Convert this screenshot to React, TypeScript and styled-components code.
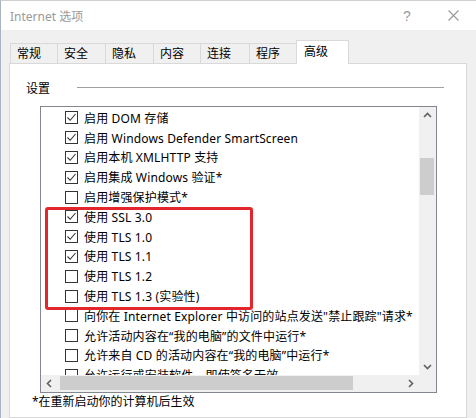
import React from "react";
import styled, { createGlobalStyle } from "styled-components";

const GlobalStyle = createGlobalStyle`
  html, body { margin: 0; padding: 0; background: #f0f0f0; }
  body { font-family: "Noto Sans", "Noto Sans CJK SC", sans-serif; font-size: 12px; color: #000; }
`;

const Window = styled.div`
  position: relative;
  width: 476px;
  height: 418px;
  box-sizing: border-box;
  border-left: 1px solid #a9b3c1;
  border-top: 1px solid #cfcfcf;
  background: #f0f0f0;
  display: flex;
  flex-direction: column;
  overflow: hidden;
`;

const TitleBar = styled.div`
  height: 29px;
  background: #fff;
  display: flex;
  align-items: center;
  padding-left: 9px;
`;

const Title = styled.div`
  flex: 1;
  color: #9a9a9a;
  font-size: 12px;
`;

const CaptionButton = styled.div`
  width: 46px;
  height: 29px;
  display: flex;
  align-items: center;
  justify-content: center;
  color: #9a9a9a;
  font-family: "Liberation Sans", sans-serif;
  font-size: 14px;
`;

const Body = styled.div`
  flex: 1;
  display: flex;
  flex-direction: column;
  padding: 10px 0 0 8px;
`;

const TabList = styled.div`
  display: flex;
  align-items: flex-end;
  height: 24px;
  padding-left: 1px;
  margin-bottom: -1px;
  position: relative;
  z-index: 1;
`;

const Tab = styled.div<{ $w: number; $active?: boolean }>`
  box-sizing: border-box;
  width: ${(p) => p.$w}px;
  height: ${(p) => (p.$active ? 24 : 21)}px;
  margin-left: -1px;
  border: 1px solid #d9d9d9;
  border-bottom: ${(p) => (p.$active ? "none" : "1px solid #d9d9d9")};
  background: ${(p) => (p.$active ? "#fff" : "#f0f0f0")};
  padding: ${(p) => (p.$active ? "2px 0 0 7px" : "1px 0 0 6px")};
  line-height: 17px;
  white-space: nowrap;
  &:first-child { margin-left: 0; }
`;

const Panel = styled.div`
  box-sizing: border-box;
  width: 458px;
  flex: 1;
  background: #fff;
  border: 1px solid #d9d9d9;
  display: flex;
  flex-direction: column;
`;

const GroupHeader = styled.div`
  display: flex;
  align-items: center;
  height: 16px;
  margin-top: 16px;
  padding: 0 22px 0 16px;
  gap: 27px;
`;

const GroupLine = styled.div`
  flex: 1;
  height: 1px;
  background: #a0a0a0;
  margin-top: -1px;
`;

const ListBox = styled.div`
  box-sizing: border-box;
  width: 397px;
  height: 287px;
  margin: 10px 0 0 30px;
  border: 1px solid #828790;
  display: grid;
  grid-template-columns: 1fr 17px;
  grid-template-rows: 1fr 17px;
  overflow: hidden;
`;

const Items = styled.div`
  overflow: hidden;
  padding-top: 1px;
`;

const Row = styled.div`
  height: 19.8px;
  display: flex;
  align-items: center;
  padding-left: 24px;
  white-space: nowrap;
  letter-spacing: 0.15px;
`;

const Box = styled.div`
  box-sizing: border-box;
  width: 13px;
  height: 13px;
  border: 1px solid #333;
  background: #fff;
  margin-right: 6px;
  flex: none;
  display: flex;
  align-items: center;
  justify-content: center;
`;

const VScroll = styled.div`
  background: #f0f0f0;
  display: flex;
  flex-direction: column;
`;

const HScroll = styled.div`
  background: #f0f0f0;
  display: flex;
`;

const Corner = styled.div`
  background: #f0f0f0;
`;

const ArrowBtn = styled.div`
  width: 17px;
  height: 17px;
  flex: none;
  display: flex;
  align-items: center;
  justify-content: center;
`;

const VTrack = styled.div`
  flex: 1;
  padding: 34px 2px 0 1px;
`;

const VThumb = styled.div`
  height: 37px;
  background: #cdcdcd;
`;

const HTrack = styled.div`
  flex: 1;
  padding: 1px 0 2px 2px;
  display: flex;
`;

const HThumb = styled.div`
  width: 293px;
  background: #cdcdcd;
`;

const Footer = styled.div`
  margin: 1px 0 0 22px;
  line-height: 16px;
`;

const Highlight = styled.div`
  position: absolute;
  left: 44px;
  top: 206px;
  width: 208px;
  height: 103px;
  box-sizing: border-box;
  border: 3px solid #e3262b;
  border-radius: 3px;
  pointer-events: none;
`;

const Check = () => (
  <svg width="11" height="11" viewBox="0 0 11 11">
    <polyline points="1.5,5.5 4.2,8.3 9.5,2" fill="none" stroke="#333" strokeWidth="1.1" />
  </svg>
);

const Chevron = ({ dir }: { dir: "up" | "down" | "left" | "right" }) => {
  const pts: Record<string, string> = {
    up: "1,6 4.5,2.5 8,6",
    down: "1,3 4.5,6.5 8,3",
    left: "6,1 2.5,4.5 6,8",
    right: "3,1 6.5,4.5 3,8",
  };
  return (
    <svg width="9" height="9" viewBox="0 0 9 9">
      <polyline points={pts[dir]} fill="none" stroke="#606060" strokeWidth="1.6" />
    </svg>
  );
};

const tabs: [string, number][] = [
  ["常规", 48],
  ["安全", 49],
  ["隐私", 49],
  ["内容", 48],
  ["连接", 50],
  ["程序", 48],
  ["高级", 53],
];

const items: [boolean, string][] = [
  [true, "启用 DOM 存储"],
  [true, "启用 Windows Defender SmartScreen"],
  [true, "启用本机 XMLHTTP 支持"],
  [true, "启用集成 Windows 验证*"],
  [false, "启用增强保护模式*"],
  [true, "使用 SSL 3.0"],
  [true, "使用 TLS 1.0"],
  [true, "使用 TLS 1.1"],
  [false, "使用 TLS 1.2"],
  [false, "使用 TLS 1.3 (实验性)"],
  [false, "向你在 Internet Explorer 中访问的站点发送\"禁止跟踪\"请求*"],
  [false, "允许活动内容在“我的电脑”的文件中运行*"],
  [false, "允许来自 CD 的活动内容在“我的电脑”中运行*"],
  [false, "允许运行或安装软件，即使签名无效"],
];

export default function App() {
  return (
    <>
      <GlobalStyle />
      <Window>
        <TitleBar>
          <Title>Internet 选项</Title>
          <CaptionButton>?</CaptionButton>
          <CaptionButton>
            <svg width="11" height="11" viewBox="0 0 11 11">
              <path d="M0.5 0.5 L10.5 10.5 M10.5 0.5 L0.5 10.5" stroke="#9a9a9a" strokeWidth="1.1" />
            </svg>
          </CaptionButton>
        </TitleBar>
        <Body>
          <TabList>
            {tabs.map(([t, w], i) => (
              <Tab key={t} $w={w} $active={i === tabs.length - 1}>
                {t}
              </Tab>
            ))}
          </TabList>
          <Panel>
            <GroupHeader>
              <span>设置</span>
              <GroupLine />
            </GroupHeader>
            <ListBox>
              <Items>
                {items.map(([c, t]) => (
                  <Row key={t}>
                    <Box>{c && <Check />}</Box>
                    <span>{t}</span>
                  </Row>
                ))}
              </Items>
              <VScroll>
                <ArrowBtn>
                  <Chevron dir="up" />
                </ArrowBtn>
                <VTrack>
                  <VThumb />
                </VTrack>
                <ArrowBtn>
                  <Chevron dir="down" />
                </ArrowBtn>
              </VScroll>
              <HScroll>
                <ArrowBtn>
                  <Chevron dir="left" />
                </ArrowBtn>
                <HTrack>
                  <HThumb />
                </HTrack>
                <ArrowBtn>
                  <Chevron dir="right" />
                </ArrowBtn>
              </HScroll>
              <Corner />
            </ListBox>
            <Footer>*在重新启动你的计算机后生效</Footer>
          </Panel>
        </Body>
        <Highlight />
      </Window>
    </>
  );
}
